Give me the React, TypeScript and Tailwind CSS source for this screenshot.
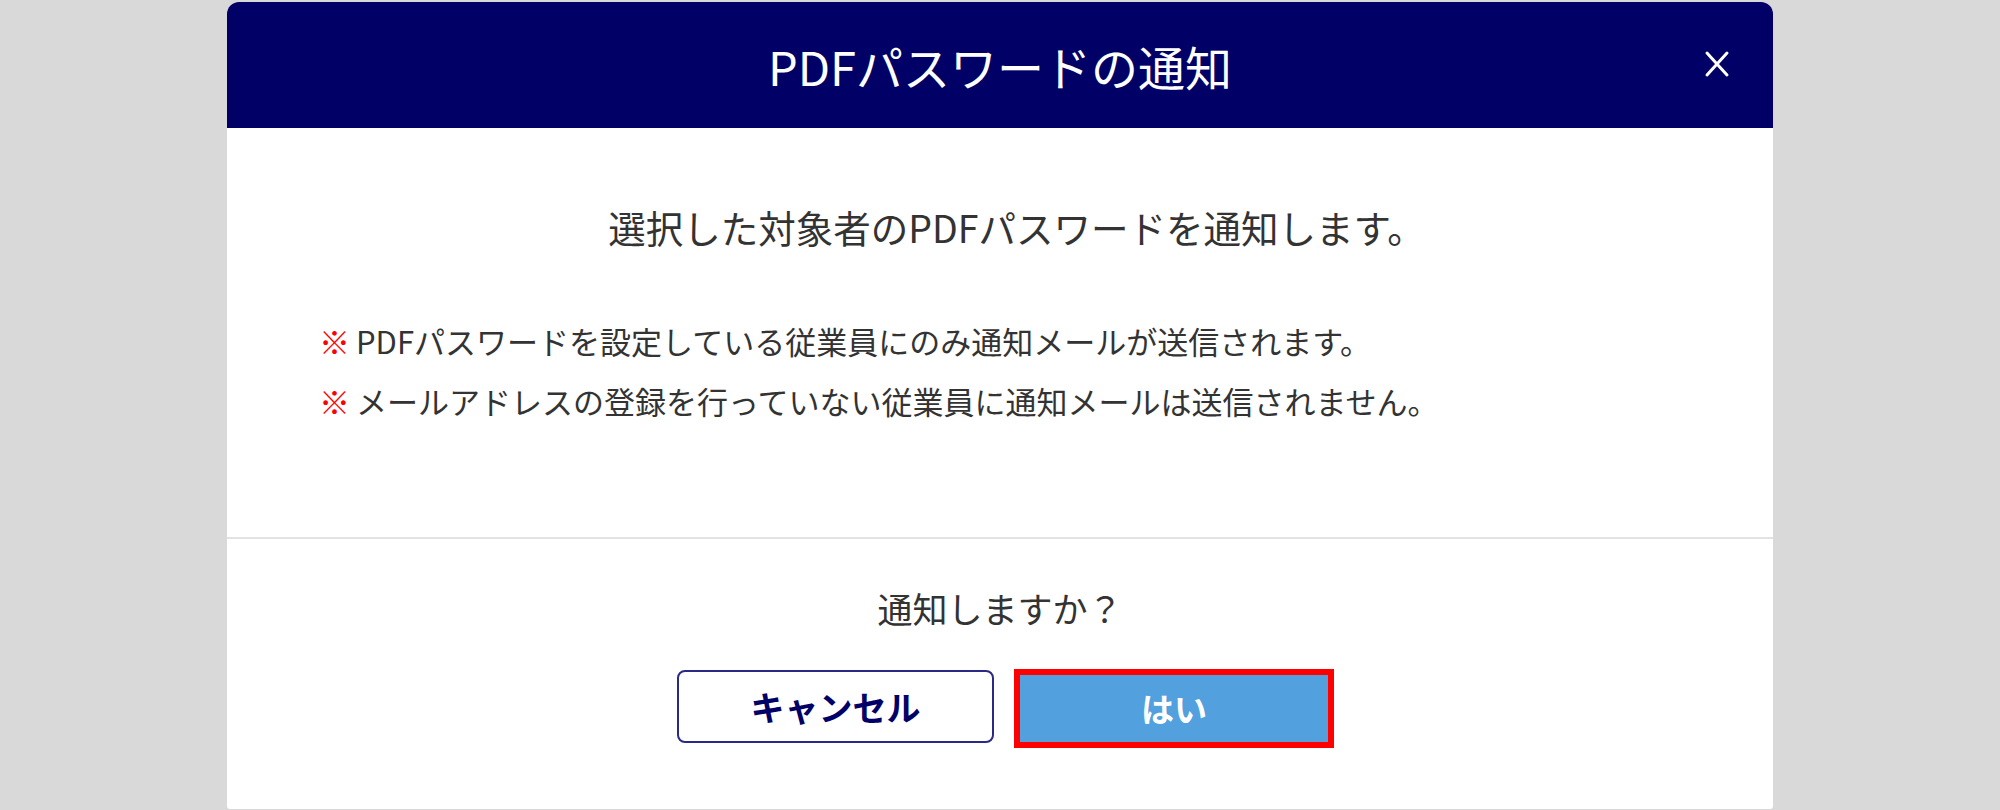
import React from 'react';

const notes = [
    'PDFパスワードを設定している従業員にのみ通知メールが送信されます。',
    'メールアドレスの登録を行っていない従業員に通知メールは送信されません。',
];

const CloseIcon: React.FC = () => (
    <svg width="26" height="28" viewBox="0 0 26 28" fill="none">
        <path
            d="M3 3 L23 25 M23 3 L3 25"
            stroke="white"
            strokeWidth="3"
            strokeLinecap="round"
        />
    </svg>
);

export default function App() {
    return (
        <div className="flex min-h-[810px] w-full justify-center bg-[#d9d9d9] pt-[2px] font-['Noto_Sans_CJK_JP',sans-serif]">
            <div className="flex h-[807px] w-[1546px] flex-col overflow-hidden rounded-t-[12px] rounded-b-[3px] bg-white">
                {/* header */}
                <div className="relative flex h-[126px] shrink-0 items-center justify-center bg-[#000066]">
                    <h1 className="text-[47px] leading-none font-normal text-white">
                        PDFパスワードの通知
                    </h1>
                    <button className="absolute top-[48px] right-[43px]">
                        <CloseIcon />
                    </button>
                </div>

                {/* body */}
                <div className="flex h-[411px] shrink-0 flex-col border-b-2 border-[#e3e3e3]">
                    <p className="pt-[75px] pl-[33px] text-center text-[37.5px] leading-[48px] text-[#333333]">
                        選択した対象者のPDFパスワードを通知します。
                    </p>
                    <ul className="mt-[60px] flex flex-col pl-[92px]">
                        {notes.map((n) => (
                            <li
                                key={n}
                                className="flex items-center text-[31px] leading-[60px] text-[#333333]"
                            >
                                <span className="mr-[6px] font-bold text-[#ff0000]">
                                    ※
                                </span>
                                {n}
                            </li>
                        ))}
                    </ul>
                </div>

                {/* footer */}
                <div className="flex flex-col items-center pt-[45px]">
                    <p className="text-[35px] leading-[48px] text-[#333333]">
                        通知しますか？
                    </p>
                    <div className="mt-[37px] flex items-start gap-[20px] pl-[11px]">
                        <button className="mt-[1px] flex h-[73px] w-[317px] items-center justify-center rounded-[8px] border-2 border-[#2a2a86] bg-white text-[34px] font-bold text-[#000066]">
                            キャンセル
                        </button>
                        <button className="flex h-[79px] w-[320px] items-center justify-center border-[6px] border-[#ff0000] bg-[#52a0de] text-[33px] font-bold text-white">
                            はい
                        </button>
                    </div>
                </div>
            </div>
        </div>
    );
}
